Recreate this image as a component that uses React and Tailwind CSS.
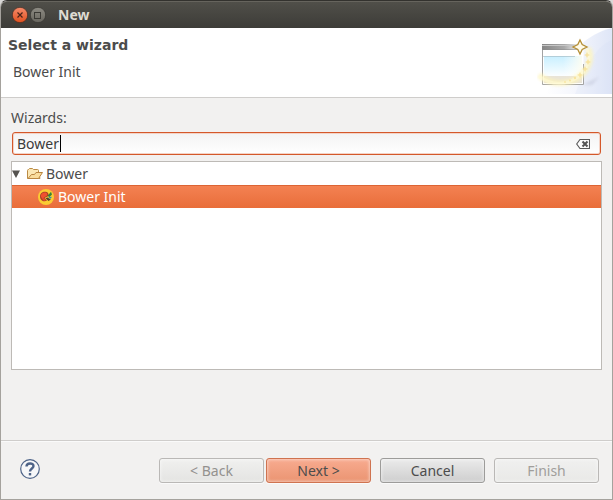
import React, { useState } from 'react';

const BUTTON_BASE =
  'h-[25px] flex-1 max-w-[105px] rounded-[3px] border text-sm leading-5 text-center shadow-[inset_0_0_3px_1px_rgba(255,255,255,0.45),0_1px_0_#fafafa]';

const CloseIcon = () => (
  <svg viewBox="0 0 16 16" className="h-4 w-4" aria-hidden="true">
    <defs>
      <linearGradient id="close-fill" x1="0" y1="0" x2="0" y2="1">
        <stop offset="0" stopColor="#f68b6b" />
        <stop offset="1" stopColor="#e0501f" />
      </linearGradient>
    </defs>
    <circle cx="8" cy="8" r="7.700" fill="url(#close-fill)" stroke="#3c2b23" strokeWidth="0.7" />
    <path d="M5.500 5.500l5 5M10.500 5.500l-5 5" stroke="#4a2318" strokeWidth="1.200" />
  </svg>
);

const MaximizeIcon = () => (
  <svg viewBox="0 0 16 16" className="h-4 w-4" aria-hidden="true">
    <defs>
      <linearGradient id="max-fill" x1="0" y1="0" x2="0" y2="1">
        <stop offset="0" stopColor="#8d8b83" />
        <stop offset="1" stopColor="#67655e" />
      </linearGradient>
    </defs>
    <circle cx="8" cy="8" r="7.700" fill="url(#max-fill)" stroke="#33322e" strokeWidth="0.7" />
    <rect x="4.500" y="5.500" width="6" height="6" fill="none" stroke="#3a3934" />
  </svg>
);

const WizardBanner = () => (
  <svg viewBox="0 0 75 66" className="h-[66px] w-[75px] shrink-0" aria-hidden="true">
    <defs>
      <linearGradient id="swoosh" x1="0" y1="0" x2="1" y2="0">
        <stop offset="0" stopColor="#ffffff" />
        <stop offset="0.5" stopColor="#f3f5fc" />
        <stop offset="1" stopColor="#dfe6f7" />
      </linearGradient>
      <linearGradient id="bar" x1="0" y1="0" x2="1" y2="0">
        <stop offset="0" stopColor="#858585" />
        <stop offset="0.6" stopColor="#a9a9a9" />
        <stop offset="1" stopColor="#f2f2f2" />
      </linearGradient>
      <linearGradient id="pane" x1="0" y1="0" x2="0" y2="1">
        <stop offset="0" stopColor="#c8efff" />
        <stop offset="1" stopColor="#fbfeff" />
      </linearGradient>
      <linearGradient id="pane-fade" x1="0" y1="0" x2="1" y2="0">
        <stop offset="0.5" stopColor="#fff" stopOpacity="0" />
        <stop offset="1" stopColor="#fffef0" stopOpacity="0.9" />
      </linearGradient>
      <filter id="glow" x="-30%" y="-30%" width="160%" height="160%">
        <feGaussianBlur stdDeviation="1.5" />
      </filter>
    </defs>
    <path d="M75 0C62 3 52 9 42 18L8 66H75Z" fill="url(#swoosh)" />
    <path d="M75 12C60 18 52 32 38 66H75Z" fill="#d3ddf5" opacity="0.2" />
    <path d="M45 57L62 49L55 57Z" fill="#a9adc4" opacity="0.35" filter="url(#glow)" />
    <rect x="5.500" y="16" width="41" height="40" fill="#ffffff" />
    <rect x="5" y="16" width="37" height="6" fill="url(#bar)" />
    <path d="M5 17.500H37" stroke="#c6c6c6" />
    <path d="M5 21.500H42" stroke="#8a8a8a" opacity="0.5" />
    <rect x="7" y="28" width="38" height="20" fill="url(#pane)" />
    <rect x="7" y="28" width="38" height="20" fill="url(#pane-fade)" />
    <rect x="7" y="48" width="38" height="7" fill="#e9e4d8" />
    <path d="M5.500 22V56.500H46.500V36" fill="none" stroke="#a3a3a3" />
    <path d="M6 28.500H38" stroke="#a3b8c0" opacity="0.6" />
    <path d="M2 47C14 58 33 57 43 48C52 41 56 30 51 20" fill="none" stroke="#fff5b8" strokeWidth="6" opacity="0.7" filter="url(#glow)" />
    <path d="M2 48C14 58 30 57 41 49C50 42 54 32 50 21" fill="none" stroke="#fffbdc" strokeWidth="3" opacity="0.5" />
    <g fill="#f6dd8c" opacity="0.7">
      <path d="M50 24L51 26L53 27L51 28L50 30L49 28L47 27L49 26Z" />
      <path d="M51 31L52 33L54 34L52 35L51 37L50 35L48 34L50 33Z" />
      <path d="M48 38L49 40L51 41L49 42L48 44L47 42L45 41L47 40Z" />
      <path d="M43 44L44 46L46 47L44 48L43 50L42 48L40 47L42 46Z" />
      <circle cx="38" cy="50" r="1.200" />
      <circle cx="33" cy="52.500" r="1" />
      <circle cx="28" cy="54" r="0.900" />
    </g>
    <path d="M43 12L45.200 16.600L50 19L45.200 21.400L43 26L40.800 21.400L36 19L40.800 16.600Z" fill="#fffbe9" stroke="#b48e34" strokeWidth="1.300" />
  </svg>
);

const ClearIcon = () => (
  <svg viewBox="0 0 14 10" className="h-[10px] w-[14px]" aria-hidden="true">
    <path d="M4 0.500H13.500V9.500H4L0.700 5Z" fill="#fdfdfd" stroke="#5a5a5a" strokeWidth="1.1" />
    <path d="M6.500 2.500L11.500 7.500M11.500 2.500L6.500 7.500" stroke="#555555" strokeWidth="2" />
  </svg>
);

const FolderIcon = () => (
  <svg viewBox="0 0 16 16" className="h-4 w-4" aria-hidden="true">
    <path d="M0.500 12.500V4.500Q0.500 3.500 1.500 3.500L2.500 2.500H5.500L6.500 3.500H10.500Q11.500 3.500 11.500 4.500V6.500L13 12.500Z" fill="#fbe7b4" stroke="#bb8b45" />
    <path d="M1 12.500L4.500 8.500H7.500L9 6.500H15.500L11.500 12.500Z" fill="#f9dc9c" stroke="#b98540" strokeLinejoin="round" />
  </svg>
);

const BowerIcon = () => (
  <svg viewBox="0 0 16 16" className="h-4 w-4" aria-hidden="true">
    <circle cx="8" cy="8" r="8" fill="#fbcb33" />
    <path d="M2 7.500C2 4.500 4.500 2.500 7.500 2.800C9.300 3 10.300 4 10.400 5L11 6.500L9.500 7.500L6.500 9L9 11.500C6 13.500 2 11.500 2 7.500Z" fill="#a8402a" />
    <path d="M2.800 7.300C2.800 4.800 5 3.300 7.500 3.600C9.300 3.900 9.700 5.500 8.800 6.800L6 8.500L4.300 10Z" fill="#f0502f" />
    <path d="M4.300 10L5.800 9L8 11.300L6 12Z" fill="#e84a2b" />
    <path d="M9.500 7L13 2.800L14 5.500L11.500 8Z" fill="#34813a" />
    <path d="M10 8.300L14 7.800L12.500 9.800Z" fill="#2b91b5" />
    <path d="M7.500 9.300L9.500 8.500L12.800 10.600L10.500 12Z" fill="#55402c" />
  </svg>
);

const HelpIcon = () => (
  <svg viewBox="0 0 20 20" className="h-5 w-5" aria-hidden="true">
    <circle cx="10" cy="10" r="9.300" fill="#f6f7f9" stroke="#4d6388" strokeWidth="1.200" />
    <path d="M6.500 7.500C6.500 3.500 13.500 3.500 13.500 7C13.500 9.500 10 9.500 10 12.500" fill="none" stroke="#4d6388" strokeWidth="2.400" />
    <rect x="8.800" y="14" width="2.400" height="2.400" fill="#4d6388" />
  </svg>
);

const TitleBar = () => (
  <div className="flex h-[27px] items-center rounded-t-[6px] border-t border-[#66645d] bg-linear-to-b from-[#504f49] to-[#3d3c38] pl-[11px]">
    <button type="button" aria-label="Close" className="mr-[2px]">
      <CloseIcon />
    </button>
    <button type="button" aria-label="Maximize">
      <MaximizeIcon />
    </button>
    <span className="ml-3 text-sm leading-5 font-bold text-[#dfdbd2]">New</span>
  </div>
);

const WizardHeader = () => (
  <header className="flex h-[70px] items-start justify-between border-b border-[#cfcdcb] bg-white">
    <div className="pt-[7px] pl-[7px]">
      <h1 className="font-['DejaVu_Sans',sans-serif] text-sm leading-5 font-bold">Select a wizard</h1>
      <p className="mt-[7px] pl-[5px] text-sm leading-5">Bower Init</p>
    </div>
    <WizardBanner />
  </header>
);

const WizardTree = () => (
  <ul role="tree" aria-label="Wizards" className="mt-[6px] flex-1 border border-[#bdbab6] bg-white text-sm leading-[22px]">
    <li role="treeitem" aria-expanded="true">
      <div className="flex h-[23px] items-center">
        <svg viewBox="0 0 9 8" className="mr-[6px] h-2 w-[9px]" aria-hidden="true">
          <path d="M0 0.500H8L4 8Z" fill="#55534f" />
        </svg>
        <FolderIcon />
        <span className="ml-[3px]">Bower</span>
      </div>
      <ul role="group">
        <li
          role="treeitem"
          aria-selected="true"
          className="flex h-[23px] items-center bg-linear-to-b from-[#f48253] to-[#e96d39] pl-[26px] text-white shadow-[inset_0_1px_0_#dc6434]"
        >
          <BowerIcon />
          <span className="ml-1">Bower Init</span>
        </li>
      </ul>
    </li>
  </ul>
);

const App = () => {
  const [filter, setFilter] = useState('Bower');

  return (
    <div className="bg-[#d9d8d6] font-['Noto_Sans',sans-serif] text-[#4c4c4c]">
      <div className="flex min-h-screen flex-col rounded-t-[7px] border border-t-[#33322e] border-r-[#a5a29d] border-b-[#a5a29d] border-l-[#a5a29d] bg-[#f2f1f0]">
        <TitleBar />
        <WizardHeader />

        <main className="flex flex-1 flex-col px-[10px] pt-[10px] pb-[70px]">
          <label htmlFor="filter" className="text-sm leading-5">
            Wizards:
          </label>
          <div className="relative mx-px mt-1 flex h-[23px] items-center rounded-[3px] border border-[#d4582a] bg-linear-to-b from-[#f3f3f3] to-white pr-[10px] pl-1 shadow-[inset_0_0_0_1px_#f4d3c6]">
            <input
              id="filter"
              type="text"
              value={filter}
              onChange={(e) => setFilter(e.target.value)}
              className="min-w-0 flex-1 bg-transparent text-sm leading-5 text-[#3c3c3c] caret-transparent outline-none"
            />
            {/* Text cursor, placed right after the typed text */}
            <span className="pointer-events-none absolute top-[2px] left-1 flex gap-px text-sm leading-[17px]" aria-hidden="true">
              <span className="invisible whitespace-pre">{filter}</span>
              <span className="h-[17px] w-px bg-black" />
            </span>
            <button type="button" aria-label="Clear" onClick={() => setFilter('')}>
              <ClearIcon />
            </button>
          </div>
          <WizardTree />
        </main>

        <footer className="flex h-[59px] items-start justify-between border-t border-[#cfcdcb] pt-[17px] pr-[13px] pl-[19px] shadow-[inset_0_1px_0_#fafafa]">
          <button type="button" aria-label="Help" className="mt-px shrink-0">
            <HelpIcon />
          </button>
          <div className="flex flex-1 justify-end pl-4">
            <button type="button" disabled className={`${BUTTON_BASE} mr-[2px] border-[#bab8b6] bg-linear-to-b from-[#f0f0ef] to-[#e4e4e2] text-[#93918e]`}>
              &lt; Back
            </button>
            <button type="button" className={`${BUTTON_BASE} mr-[9px] border-[#cf7350] bg-linear-to-b from-[#f8ab90] to-[#ea9471]`}>
              Next &gt;
            </button>
            <button type="button" className={`${BUTTON_BASE} mr-[9px] border-[#9d9c9a] bg-linear-to-b from-[#ebebeb] to-[#cecece]`}>
              Cancel
            </button>
            <button type="button" disabled className={`${BUTTON_BASE} border-[#bab8b6] bg-linear-to-b from-[#f0f0ef] to-[#e9e9e7] text-[#a09e9b]`}>
              Finish
            </button>
          </div>
        </footer>
      </div>
    </div>
  );
};

export default App;
